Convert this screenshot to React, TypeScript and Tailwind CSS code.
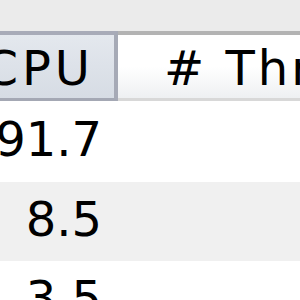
import React from 'react';

const rows = [
  { cpu: '91.7', bg: 'bg-white', h: 'h-[81px]' },
  { cpu: '8.5', bg: 'bg-[#f0f0f0]', h: 'h-[79px]' },
  { cpu: '3.5', bg: 'bg-white', h: 'h-[80px]' },
];

export default function App() {
  return (
    <div className="w-[300px] h-[300px] overflow-hidden bg-white text-black font-['DejaVu_Sans',sans-serif] text-[48px] leading-none">
      <div className="h-[31px] bg-[#ebebeb]" />

      {/* column headers */}
      <div className="flex h-[70px]">
        <div className="w-[118px] shrink-0 flex items-center justify-end pr-[20px] pt-[2px] tracking-[4px] border-t-4 border-b-[3px] border-r-4 border-t-[#a8abb8] border-b-[#a4a8b4] border-r-[#a6aab6] bg-gradient-to-b from-[#e4e8ee] via-[#dde2e9] to-[#d6dce4] whitespace-nowrap overflow-hidden">
          % CPU
        </div>
        <div className="flex-1 flex items-center pl-[46px] pt-[2px] tracking-[3px] border-t-4 border-b-[3px] border-t-[#b3b3b3] border-b-[#d8d8d8] bg-gradient-to-b from-white via-white to-[#eef0f2] whitespace-nowrap overflow-hidden">
          # Threads
        </div>
      </div>

      {/* process rows */}
      {rows.map((r) => (
        <div key={r.cpu} className={`flex ${r.h} ${r.bg}`}>
          <div className="w-[118px] shrink-0 flex items-center justify-end pr-[16px] pb-[6px] whitespace-nowrap overflow-hidden">
            {r.cpu}
          </div>
          <div className="flex-1" />
        </div>
      ))}
    </div>
  );
}
